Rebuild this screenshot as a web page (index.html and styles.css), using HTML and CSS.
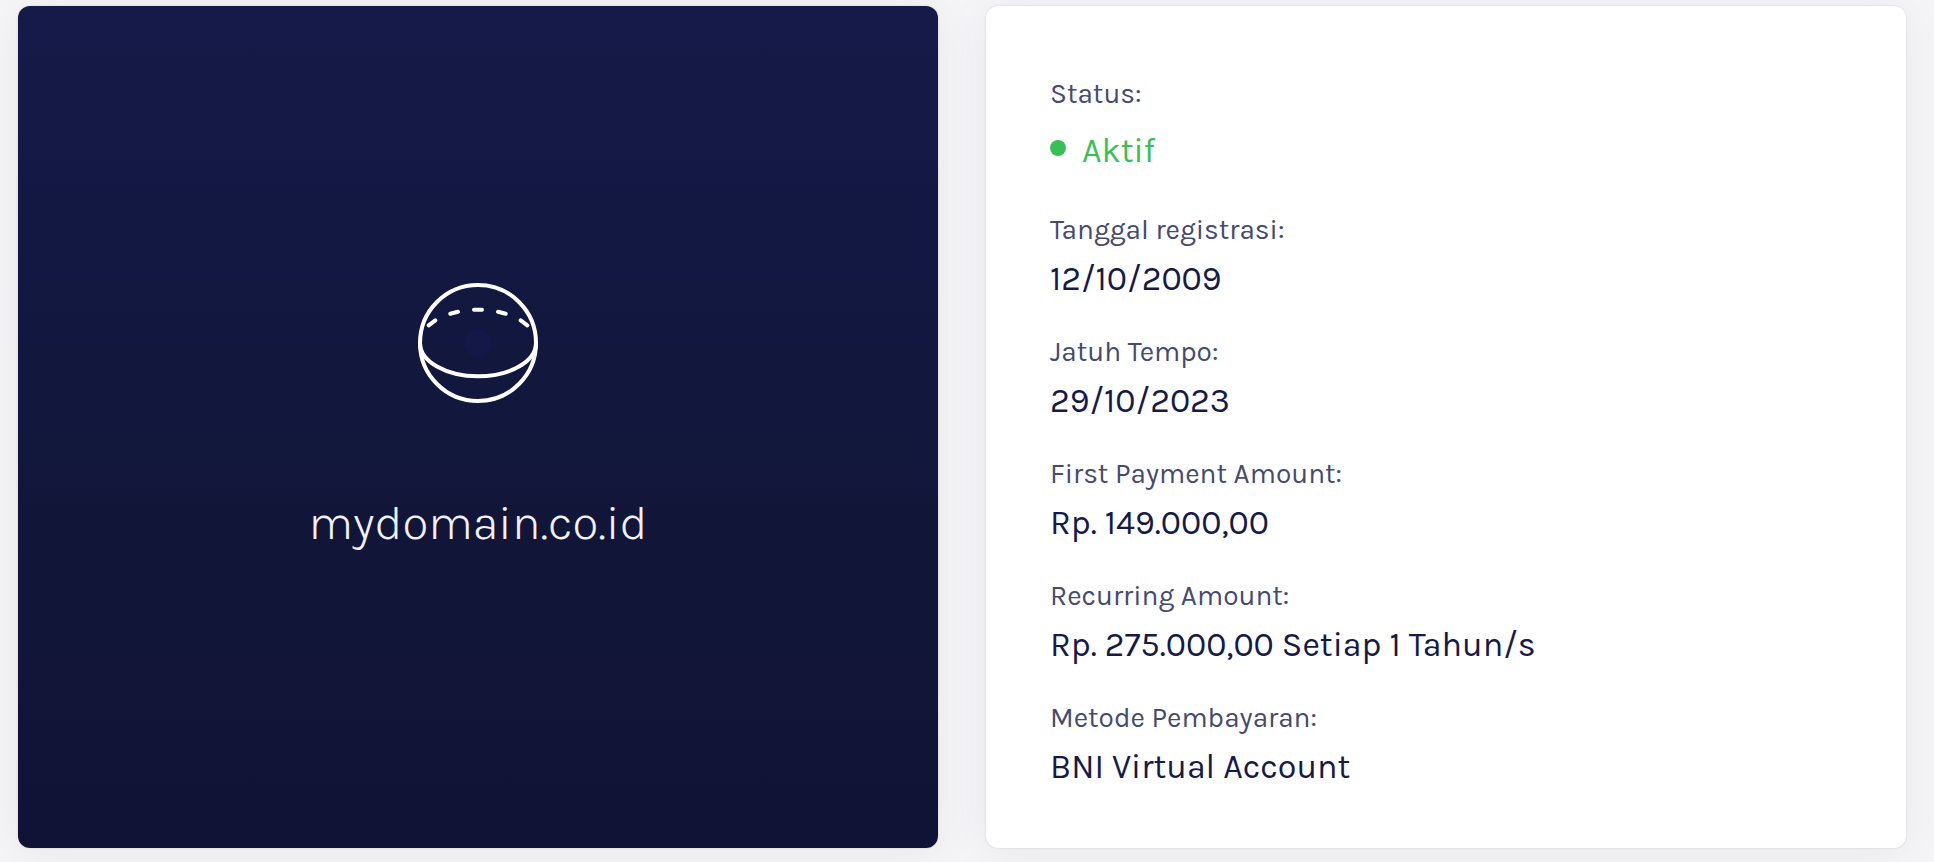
FILE: index.html
```
<!DOCTYPE html>
<html lang="id">
<head>
  <meta charset="UTF-8">
  <meta name="viewport" content="width=device-width, initial-scale=1">
  <title>mydomain.co.id</title>
  <link rel="stylesheet" href="styles.css">
</head>
<body>
<main class="overview">
  <section class="card domain">
    <svg class="domain-icon" viewBox="0 0 120 120" aria-hidden="true">
      <circle class="core" cx="60" cy="60" r="14"/>
      <circle cx="60" cy="60" r="58"/>
      <path d="M2 60C2 78.400 28 93.300 60 93.300S118 78.400 118 60"/>
      <path d="M10.700 42.300L17.300 37.300M32.300 30.700L40 28.700M56 26.700H64M80 28.700L87.700 30.700M102.700 37.300L109.300 42.300"/>
    </svg>
    <h1 class="domain-name">mydomain.co.id</h1>
  </section>

  <dl class="card details">
    <div class="field field-status">
      <dt>Status:</dt>
      <dd><span class="dot"></span>Aktif</dd>
    </div>
    <div class="field">
      <dt>Tanggal registrasi:</dt>
      <dd>12/10/2009</dd>
    </div>
    <div class="field">
      <dt>Jatuh Tempo:</dt>
      <dd>29/10/2023</dd>
    </div>
    <div class="field">
      <dt>First Payment Amount:</dt>
      <dd>Rp. 149.000,00</dd>
    </div>
    <div class="field">
      <dt>Recurring Amount:</dt>
      <dd>Rp. 275.000,00 Setiap 1 Tahun/s</dd>
    </div>
    <div class="field">
      <dt>Metode Pembayaran:</dt>
      <dd>BNI Virtual Account</dd>
    </div>
  </dl>
</main>
</body>
</html>
```
FILE: styles.css
```
* { box-sizing: border-box; }
body { margin: 0; background: #f5f5f8; font-family: Karla, Inter, sans-serif; color: #151a48; }

.overview {
  display: grid;
  grid-template-columns: 1fr 1fr;
  gap: 48px;
  padding: 6px 28px 14px 18px;
}
.card {
  margin: 0;
  border-radius: 12px;
  box-shadow: 0 0 2px rgba(0,0,0,0.15), 0 4px 48px rgba(0,0,0,0.06);
}

/* Domain */
.domain {
  display: flex;
  flex-direction: column;
  align-items: center;
  justify-content: center;
  gap: 88px;
  padding-bottom: 16px;
  background: linear-gradient(#151a48, #131843 25%, #111638 65%, #111336);
}
.domain-icon {
  width: 120px;
  height: 120px;
  fill: none;
  stroke: #fff;
  stroke-width: 4;
  stroke-linecap: round;
}
.domain-icon .core { fill: #141847; stroke: none; }
.domain-name {
  margin: 0;
  font-size: 48px;
  font-weight: 300;
  line-height: 64px;
  color: #f0f0f5;
}

/* Details */
.details {
  padding: 68px 64px 52px;
  background: #fff;
}
.field { margin-bottom: 24px; }
.field:last-child { margin-bottom: 0; }
.field dt {
  font-size: 28px;
  line-height: 40px;
  color: #454a70;
}
.field dd {
  margin: 0;
  font-size: 34px;
  line-height: 58px;
}
.field-status { margin-bottom: 30px; }
.field-status dd {
  display: flex;
  align-items: center;
  gap: 16px;
  padding-top: 8px;
  color: #3abf58;
}
.dot {
  width: 16px;
  height: 16px;
  margin-bottom: 6px;
  border-radius: 50%;
  background: #3abf58;
}
```
